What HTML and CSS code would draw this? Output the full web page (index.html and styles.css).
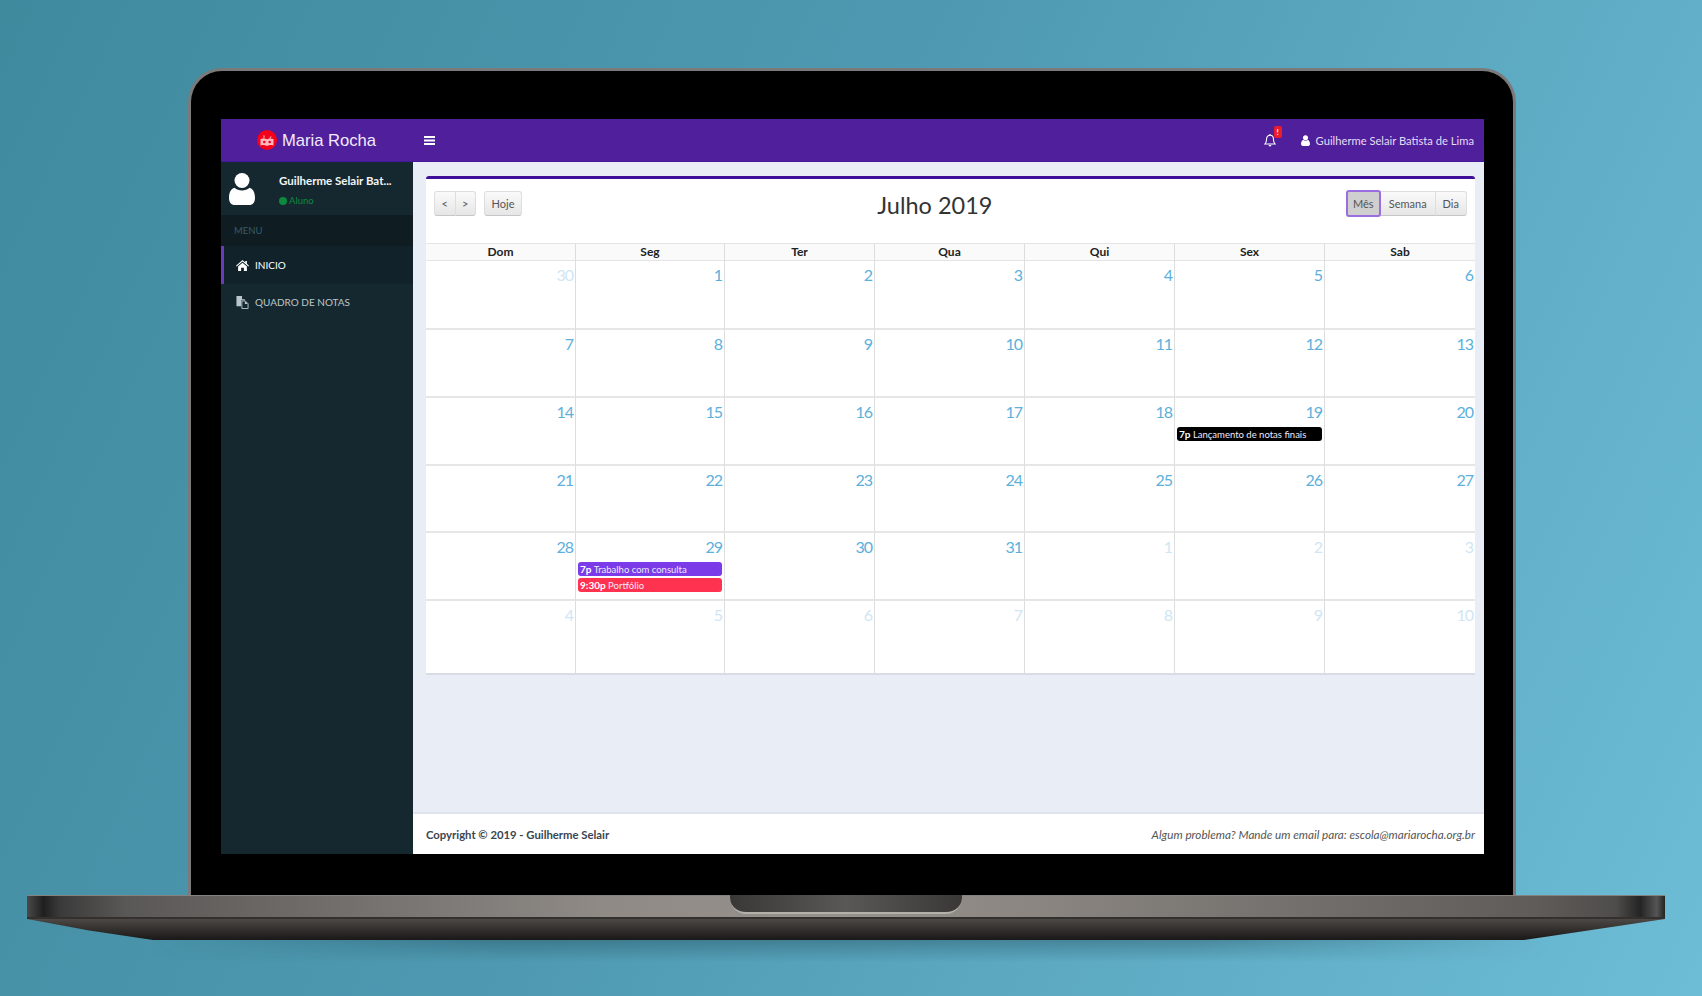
FILE: index.html
```html
<!DOCTYPE html>
<html>
  <head>
    <meta charset="UTF-8" />
    <title>Maria Rocha</title>
    <link rel="stylesheet" href="styles.css">
  </head>
  <body>
    <div class="laptop">
      <div class="lid">
        <div class="screen">
          <header class="topbar">
            <div class="brand">
              <svg class="brand-logo" viewBox="0 0 20 20" xmlns="http://www.w3.org/2000/svg">
                <circle cx="10" cy="10" r="10" fill="#f5001a" />
                <path d="M3.500 9c2.200-.8 4.600-.8 6.500.3 1.900-1.100 4.300-1.100 6.500-.3v6.500c-2.200-.6-4.600-.5-6.500.4-1.900-.9-4.300-1-6.500-.4z" fill="#ffb9bf" />
                <path d="M6.500 9V5l1.200.8L7.200 9zM12 8.500l2-2.500.5.5L13 9z" fill="#ffb9bf" />
                <circle cx="7.300" cy="12" r="1.300" fill="#f5001a" />
                <circle cx="12.700" cy="12" r="1.300" fill="#f5001a" />
              </svg>
              <span class="brand-name">Maria Rocha</span>
            </div>
            <svg class="burger" viewBox="0 0 11 9" xmlns="http://www.w3.org/2000/svg">
              <path d="M0 0h11v2H0zM0 3.500h11v2H0zM0 7h11v2H0z" fill="#fff" />
            </svg>
            <div class="topbar-right">
              <div class="bell">
                <svg class="bell-icon" viewBox="0 0 12 13" xmlns="http://www.w3.org/2000/svg">
                  <path d="M6 1.300c2.200 0 3.400 1.600 3.400 3.700 0 2.600.6 3.800 1.700 5H.9c1.100-1.200 1.700-2.400 1.700-5 0-2.100 1.200-3.700 3.400-3.700z" fill="none" stroke="#fff" stroke-width="1.100" />
                  <path d="M4.600 11h2.800a1.400 1.400 0 0 1-2.800 0zM5.400 0h1.200v1.500H5.400z" fill="#fff" />
                </svg>
                <span class="bell-badge">!</span>
              </div>
              <div class="topbar-user">
                <svg class="topbar-user-icon" viewBox="0 0 10 12" xmlns="http://www.w3.org/2000/svg">
                  <circle cx="5" cy="3" r="2.800" fill="#fff" />
                  <path d="M0 10c0-2.800 1.200-4.300 2.600-4.500.7.600 1.500.9 2.400.9s1.700-.3 2.400-.9C8.800 5.700 10 7.200 10 10c0 1.300-.8 2-1.900 2H1.900C.8 12 0 11.300 0 10z" fill="#fff" />
                </svg>
                Guilherme Selair Batista de Lima
              </div>
            </div>
          </header>

          <div class="app-body">
            <aside class="sidebar">
              <div class="user-panel">
                <svg class="user-avatar" viewBox="0 0 26 32" xmlns="http://www.w3.org/2000/svg">
                  <circle cx="13" cy="7.500" r="7.500" fill="#fff" />
                  <path d="M0 25c0-6.500 2.500-9.500 5.500-10.300 2 1.800 4.700 2.700 7.500 2.700s5.500-.9 7.500-2.700C23.500 15.500 26 18.500 26 25c0 4.500-2.500 7-5.500 7h-15C2.500 32 0 29.500 0 25z" fill="#fff" />
                </svg>
                <div class="user-info">
                  <div class="user-name">Guilherme Selair Bat...</div>
                  <div class="user-status"><span class="status-dot"></span>Aluno</div>
                </div>
              </div>
              <div class="menu-label">MENU</div>
              <a class="menu-item active">
                <svg class="menu-icon" viewBox="0 0 13 11" xmlns="http://www.w3.org/2000/svg">
                  <path d="M6.500 0L9.300 2.400V1h1.600v2.800L13 5.700l-.7.800-5.800-4.900-5.800 4.900L0 5.700z" fill="#fff" />
                  <path d="M6.500 2.800l4.400 3.700V11H7.900V7.800H5.100V11H2.100V6.500z" fill="#fff" />
                </svg>
                INICIO
              </a>
              <a class="menu-item">
                <svg class="menu-icon" viewBox="0 0 13 14" xmlns="http://www.w3.org/2000/svg">
                  <path d="M0 0h6v3.500h3v1H5v6.500H0z" fill="#b9c7cc" />
                  <path d="M5.800 5.300h3.700L12.500 8.300v5.200H5.800z" fill="none" stroke="#b9c7cc" stroke-width="1" />
                  <path d="M9 5.500v3.200h3.200z" fill="#b9c7cc" />
                </svg>
                QUADRO DE NOTAS
              </a>
            </aside>

            <main class="content">
              <div class="wrapper">
                <section class="card">
                  <div class="cal-toolbar">
                    <div class="cal-left">
                      <div class="btn-group">
                        <button class="cal-btn narrow">&lt;</button>
                        <button class="cal-btn narrow">&gt;</button>
                      </div>
                      <button class="cal-btn today">Hoje</button>
                    </div>
                    <h2 class="cal-title">Julho 2019</h2>
                    <div class="btn-group">
                      <button class="cal-btn selected">Mês</button>
                      <button class="cal-btn">Semana</button>
                      <button class="cal-btn compact">Dia</button>
                    </div>
                  </div>

                  <div class="cal-grid">
                    <div class="cal-head">Dom</div>
                    <div class="cal-head">Seg</div>
                    <div class="cal-head">Ter</div>
                    <div class="cal-head">Qua</div>
                    <div class="cal-head">Qui</div>
                    <div class="cal-head">Sex</div>
                    <div class="cal-head">Sab</div>

                    <div class="cal-day other">30</div>
                    <div class="cal-day">1</div>
                    <div class="cal-day">2</div>
                    <div class="cal-day">3</div>
                    <div class="cal-day">4</div>
                    <div class="cal-day">5</div>
                    <div class="cal-day">6</div>

                    <div class="cal-day">7</div>
                    <div class="cal-day">8</div>
                    <div class="cal-day">9</div>
                    <div class="cal-day">10</div>
                    <div class="cal-day">11</div>
                    <div class="cal-day">12</div>
                    <div class="cal-day">13</div>

                    <div class="cal-day">14</div>
                    <div class="cal-day">15</div>
                    <div class="cal-day">16</div>
                    <div class="cal-day">17</div>
                    <div class="cal-day">18</div>
                    <div class="cal-day">19
                      <div class="event black"><b>7p</b> Lançamento de notas finais</div>
                    </div>
                    <div class="cal-day">20</div>

                    <div class="cal-day">21</div>
                    <div class="cal-day">22</div>
                    <div class="cal-day">23</div>
                    <div class="cal-day">24</div>
                    <div class="cal-day">25</div>
                    <div class="cal-day">26</div>
                    <div class="cal-day">27</div>

                    <div class="cal-day">28</div>
                    <div class="cal-day">29
                      <div class="event purple"><b>7p</b> Trabalho com consulta</div>
                      <div class="event red"><b>9:30p</b> Portfólio</div>
                    </div>
                    <div class="cal-day">30</div>
                    <div class="cal-day">31</div>
                    <div class="cal-day other">1</div>
                    <div class="cal-day other">2</div>
                    <div class="cal-day other">3</div>

                    <div class="cal-day other">4</div>
                    <div class="cal-day other">5</div>
                    <div class="cal-day other">6</div>
                    <div class="cal-day other">7</div>
                    <div class="cal-day other">8</div>
                    <div class="cal-day other">9</div>
                    <div class="cal-day other">10</div>
                  </div>
                </section>
              </div>
              <footer class="footer">
                <strong>Copyright © 2019 - Guilherme Selair</strong>
                <em>Algum problema? Mande um email para: escola@mariarocha.org.br</em>
              </footer>
            </main>
          </div>
        </div>
      </div>
      <div class="base">
        <div class="base-top"><div class="notch"></div></div>
        <div class="base-bottom"></div>
      </div>
      <div class="base-shadow"></div>
    </div>
  </body>
</html>
```

FILE: styles.css
```css
* {
  box-sizing: border-box;
}
html,
body {
  height: 100%;
}
body {
  margin: 0;
  overflow: hidden;
  font-family: Lato, "Noto Sans", sans-serif;
  font-size: 12px;
  color: #333;
  background: linear-gradient(115deg, #3f8a9d 0%, #4f9ab2 45%, #6dbdd6 100%);
}
.laptop {
  padding-top: 68px;
  display: flex;
  flex-direction: column;
}
.lid {
  width: 1328px;
  height: 827px;
  margin-left: 188px;
  padding: 48px 29px 38px 30px;
  background-color: #000;
  border: 3px solid #7a7a7a;
  border-bottom: none;
  border-radius: 34px 34px 0 0;
}
.screen {
  height: 735px;
  display: flex;
  flex-direction: column;
}
.topbar {
  height: 43px;
  flex-shrink: 0;
  display: flex;
  align-items: center;
  padding: 0 10px 0 36px;
  color: #fff;
  background-color: #501f9b;
  border-bottom: 1px solid #47179a;
}
.brand {
  display: flex;
  align-items: center;
  gap: 5px;
}
.brand-logo {
  width: 20px;
  height: 20px;
}
.brand-name {
  padding-top: 1px;
  font-family: "Liberation Sans", Arial, sans-serif;
  font-size: 16.600px;
  color: #f1ebfb;
}
.burger {
  width: 11px;
  height: 9px;
  margin-left: 48px;
}
.topbar-right {
  margin-left: auto;
  display: flex;
  align-items: center;
  gap: 25px;
}
.bell {
  position: relative;
  display: flex;
}
.bell-icon {
  width: 12px;
  height: 13px;
}
.bell-badge {
  position: absolute;
  top: -8px;
  left: 10px;
  width: 8px;
  height: 12px;
  border-radius: 2px;
  background-color: #ea1c2d;
  color: #fff;
  font-size: 8px;
  font-weight: bold;
  line-height: 12px;
  text-align: center;
}
.topbar-user {
  display: flex;
  align-items: center;
  gap: 6px;
  font-size: 11.200px;
  color: #e6dcf6;
}
.topbar-user-icon {
  width: 9px;
  height: 11px;
}
.app-body {
  flex: 1;
  display: flex;
  min-height: 0;
}
.sidebar {
  width: 192px;
  flex-shrink: 0;
  background-color: #16282f;
}
.user-panel {
  height: 53px;
  display: flex;
  padding: 11px 0 0 8px;
  gap: 24px;
}
.user-avatar {
  width: 26px;
  height: 32px;
}
.user-name {
  font-weight: bold;
  font-size: 11.500px;
  line-height: 15px;
  color: #f2f5f6;
}
.user-status {
  margin-top: 7px;
  display: flex;
  align-items: center;
  gap: 2px;
  font-size: 9.500px;
  color: #0b8a3e;
}
.status-dot {
  width: 8px;
  height: 8px;
  border-radius: 50%;
  background-color: #0b8a3e;
}
.menu-label {
  height: 31px;
  padding-left: 13px;
  font-size: 9.500px;
  line-height: 31px;
  color: #3b5a66;
  background-color: #0f1d22;
}
.menu-item {
  height: 36px;
  display: flex;
  align-items: center;
  gap: 6px;
  padding-left: 15px;
  font-size: 10px;
  color: #b9c7cc;
}
.menu-item.active {
  height: 38px;
  padding-left: 12px;
  border-left: 3px solid #6a3bbd;
  background-color: #11222a;
  color: #fff;
}
.menu-icon {
  width: 13px;
  height: 13px;
}
.content {
  flex: 1;
  display: flex;
  flex-direction: column;
  background-color: #e9edf6;
  min-width: 0;
}
.wrapper {
  flex: 1;
  padding: 14px 9px 0 13px;
}
.card {
  background-color: #fff;
  border-top: 3px solid #3f0f9a;
  border-bottom: 2px solid #d9dce2;
  border-radius: 3px 3px 0 0;
}
.cal-toolbar {
  height: 64px;
  padding: 12px 8px 0;
  display: flex;
  justify-content: space-between;
  align-items: flex-start;
}
.cal-left {
  display: flex;
  gap: 8px;
}
.btn-group {
  display: flex;
}
.cal-btn {
  height: 25px;
  padding: 0 8px;
  font-family: Lato, "Noto Sans", sans-serif;
  font-size: 11px;
  color: #555;
  background: linear-gradient(#fafafa, #e6e6e6);
  border: 1px solid #dedede;
  border-bottom-color: #c6c6c6;
  margin-left: -1px;
  border-radius: 0;
}
.btn-group .cal-btn:first-child {
  margin-left: 0;
  border-radius: 3px 0 0 3px;
}
.btn-group .cal-btn:last-child {
  border-radius: 0 3px 3px 0;
}
.cal-btn.narrow {
  width: 21.500px;
  padding: 0;
}
.cal-btn.today {
  width: 38px;
  padding: 0;
  margin-left: 0;
  border-radius: 3px;
}
.cal-btn.compact {
  padding: 0 7px;
}
.btn-group .cal-btn.selected {
  width: 35px;
  height: 27px;
  margin-top: -1px;
  padding: 0;
  background: #cfcfcf;
  border: 2px solid #9a6ee0;
  border-radius: 3px;
  position: relative;
}
.cal-title {
  margin: 0 0 0 2px;
  font-size: 23.500px;
  font-weight: 400;
  line-height: 28px;
  color: #333;
}
.cal-grid {
  display: grid;
  grid-template-columns: 150px 149px 150px 150px 150px 150px 150px;
  grid-template-rows: 18px 69px 68px 68px 67px 68px 72px;
}
.cal-head {
  text-align: center;
  font-weight: bold;
  font-size: 12px;
  line-height: 16px;
  color: #222;
  background-color: #fafafa;
  border-top: 1px solid #e4e4e4;
  border-bottom: 1px solid #e4e4e4;
  border-right: 1px solid #ddd;
}
.cal-day {
  padding: 3px 2px 0;
  text-align: right;
  font-size: 16px;
  letter-spacing: -1px;
  line-height: 22px;
  color: #5bb0dc;
  border-right: 1px solid #ddd;
  border-bottom: 2px solid #e6e6e6;
}
.cal-head:nth-child(7n),
.cal-day:nth-child(7n) {
  border-right: none;
}
.cal-day:nth-last-child(-n + 7) {
  border-bottom: none;
}
.cal-day.other {
  color: #cfe6f5;
}
.event {
  height: 14px;
  margin: 0 0 2px;
  padding: 0 2px;
  border-radius: 3px;
  text-align: left;
  font-size: 9.500px;
  letter-spacing: 0;
  line-height: 14px;
  color: #f0e9fc;
}
.event b {
  font-size: 10px;
  color: #fff;
}
.event.black {
  background-color: #000;
  margin-top: 4px;
}
.event.purple {
  background-color: #7b3be8;
  margin-top: 4px;
}
.event.red {
  background-color: #ff3350;
}
.footer {
  height: 42px;
  flex-shrink: 0;
  display: flex;
  justify-content: space-between;
  align-items: center;
  padding: 0 9px 0 13px;
  background-color: #fff;
  border-top: 2px solid #dfe4ee;
  color: #3a4650;
}
.footer strong {
  font-size: 11.300px;
}
.footer em {
  font-size: 11.700px;
  color: #555;
}
.base {
  width: 1638px;
  margin-left: 27px;
}
.base-top {
  height: 24px;
  display: flex;
  justify-content: center;
  background: linear-gradient(90deg, #4a4a4a 0%, #1f1f1f 1%, #3a3a3a 2%, #5a5856 6%, #8f8a86 35%, #96918d 50%, #8a8581 62%, #5f5c59 92%, #4f4d4b 97%, #242424 98.500%, #555 99.500%, #222 100%);
  border-top: 1px solid #85827f;
  border-bottom: 2px solid #33302e;
}
.notch {
  width: 232px;
  height: 19px;
  margin-top: -1px;
  background: linear-gradient(90deg, #3a3836, #5a5856 50%, #3a3836);
  border-bottom: 2px solid #b4b0ac;
  border-radius: 0 0 16px 16px;
}
.base-bottom {
  height: 21px;
  background: linear-gradient(#4c4845, #322f2d 50%, #1a1818);
  clip-path: polygon(0 0, 100% 0, 95% 58%, 91.400% 100%, 7.700% 100%, 3.800% 55%);
}
.base-shadow {
  width: 1400px;
  height: 22px;
  margin-left: 150px;
  background: linear-gradient(rgba(20, 50, 60, 0.3), rgba(20, 50, 60, 0));
  mask-image: linear-gradient(90deg, transparent, #000 25%, #000 75%, transparent);
}
```
